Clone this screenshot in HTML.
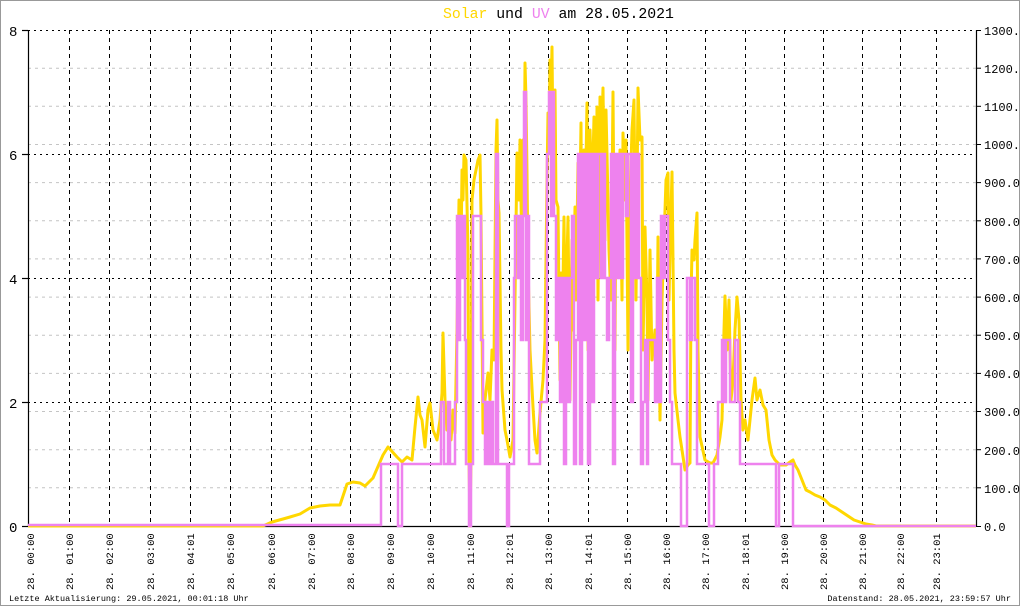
<!DOCTYPE html>
<html><head><meta charset="utf-8"><style>
html,body{margin:0;padding:0;background:#fff}
svg{display:block}
text{font-family:"Liberation Mono",monospace}
</style></head><body>
<svg width="1020" height="606" viewBox="0 0 1020 606" xmlns="http://www.w3.org/2000/svg">
<rect x="0.5" y="0.5" width="1019" height="605" fill="#fff" stroke="#999"/>
<text x="443" y="18" font-size="14.8" fill="#000"><tspan fill="#ffd700">Solar</tspan> und <tspan fill="#ee82ee">UV</tspan> am 28.05.2021</text>
<g stroke="#c4c4c4" stroke-width="1" stroke-dasharray="3,4">
<line x1="28" x2="976" y1="487.8" y2="487.8"/><line x1="28" x2="976" y1="449.7" y2="449.7"/><line x1="28" x2="976" y1="411.5" y2="411.5"/><line x1="28" x2="976" y1="373.4" y2="373.4"/><line x1="28" x2="976" y1="335.2" y2="335.2"/><line x1="28" x2="976" y1="297.1" y2="297.1"/><line x1="28" x2="976" y1="258.9" y2="258.9"/><line x1="28" x2="976" y1="220.8" y2="220.8"/><line x1="28" x2="976" y1="182.6" y2="182.6"/><line x1="28" x2="976" y1="144.5" y2="144.5"/><line x1="28" x2="976" y1="106.3" y2="106.3"/><line x1="28" x2="976" y1="68.2" y2="68.2"/>
</g>
<g stroke="#000" stroke-width="1" stroke-dasharray="2,4">
<line x1="28" x2="976" y1="402.5" y2="402.5"/><line x1="28" x2="976" y1="278.5" y2="278.5"/><line x1="28" x2="976" y1="154.5" y2="154.5"/><line x1="28" x2="976" y1="30.5" y2="30.5"/>
</g>
<g stroke="#000" stroke-width="1" stroke-dasharray="4,4">
<line x1="69.5" x2="69.5" y1="30" y2="526"/><line x1="109.5" x2="109.5" y1="30" y2="526"/><line x1="150.5" x2="150.5" y1="30" y2="526"/><line x1="190.5" x2="190.5" y1="30" y2="526"/><line x1="230.5" x2="230.5" y1="30" y2="526"/><line x1="271.5" x2="271.5" y1="30" y2="526"/><line x1="311.5" x2="311.5" y1="30" y2="526"/><line x1="350.5" x2="350.5" y1="30" y2="526"/><line x1="390.5" x2="390.5" y1="30" y2="526"/><line x1="430.5" x2="430.5" y1="30" y2="526"/><line x1="470.5" x2="470.5" y1="30" y2="526"/><line x1="509.5" x2="509.5" y1="30" y2="526"/><line x1="548.5" x2="548.5" y1="30" y2="526"/><line x1="588.5" x2="588.5" y1="30" y2="526"/><line x1="627.5" x2="627.5" y1="30" y2="526"/><line x1="666.5" x2="666.5" y1="30" y2="526"/><line x1="705.5" x2="705.5" y1="30" y2="526"/><line x1="745.5" x2="745.5" y1="30" y2="526"/><line x1="784.5" x2="784.5" y1="30" y2="526"/><line x1="823.5" x2="823.5" y1="30" y2="526"/><line x1="862.5" x2="862.5" y1="30" y2="526"/><line x1="900.5" x2="900.5" y1="30" y2="526"/><line x1="936.5" x2="936.5" y1="30" y2="526"/>
</g>
<g stroke="#000" stroke-width="1.2">
<line x1="28.5" x2="28.5" y1="30" y2="527"/><line x1="976.5" x2="976.5" y1="30" y2="527"/><line x1="28" x2="976" y1="526.5" y2="526.5"/>
<line x1="22" x2="28" y1="30.5" y2="30.5"/><line x1="22" x2="28" y1="154.5" y2="154.5"/><line x1="22" x2="28" y1="278.5" y2="278.5"/><line x1="22" x2="28" y1="402.5" y2="402.5"/><line x1="22" x2="28" y1="526.5" y2="526.5"/>
</g>
<g stroke="#000" stroke-width="1">
<line x1="976" x2="981" y1="30.5" y2="30.5"/><line x1="976" x2="981" y1="68.2" y2="68.2"/><line x1="976" x2="981" y1="106.3" y2="106.3"/><line x1="976" x2="981" y1="144.5" y2="144.5"/><line x1="976" x2="981" y1="182.6" y2="182.6"/><line x1="976" x2="981" y1="220.8" y2="220.8"/><line x1="976" x2="981" y1="258.9" y2="258.9"/><line x1="976" x2="981" y1="297.1" y2="297.1"/><line x1="976" x2="981" y1="335.2" y2="335.2"/><line x1="976" x2="981" y1="373.4" y2="373.4"/><line x1="976" x2="981" y1="411.5" y2="411.5"/><line x1="976" x2="981" y1="449.7" y2="449.7"/><line x1="976" x2="981" y1="487.8" y2="487.8"/><line x1="976" x2="981" y1="526.5" y2="526.5"/>
</g>
<polyline fill="none" stroke="#ffd700" stroke-width="3" stroke-linejoin="round" points="28,526 263,526 272,522 283,519 290,517 300,514 310,508 320,506 330,505 340,505 347,484 353,482 360,483 365,486 373,478 383,455 388,447 397,457 402,462 407,457 412,460 415,427 418,397 420,415 422,420 425,447 428,410 430,403 433,430 437,440 440,420 442,393 443,333 445,400 447,430 449,405 451,440 453,410 455,433 457,330 459,200 461,250 462,170 463,200 464,155 466,160 468,250 469,460 470,526 471,460 472,200 474,180 476,170 478,160 480,155 481,215 483,433 485,400 488,373 490,400 492,350 494,360 496,150 497,120 498,200 499,213 501,350 502,390 505,430 507,440 510,457 513,440 515,300 517,153 519,200 520,140 522,260 523,140 524,200 525,63 526,100 527,173 528,263 530,350 533,407 535,440 537,453 540,413 543,380 545,340 547,180 548,113 549,150 550,60 551,100 552,47 553,150 555,90 556,200 558,207 559,300 560,380 561,273 562,350 564,217 565,300 567,260 568,217 570,400 572,240 573,330 575,207 576,300 578,163 579,260 581,123 582,300 584,150 585,220 587,103 588,350 590,130 592,200 594,117 596,250 597,107 598,300 600,97 601,160 603,88 605,240 606,110 608,200 609,250 611,300 613,92 615,350 616,180 618,250 620,150 622,300 623,133 625,200 626,140 628,350 630,200 632,130 634,100 636,300 638,88 640,140 642,137 643,350 645,227 647,300 648,400 650,250 652,360 655,330 657,350 658,237 660,420 662,300 664,240 666,180 668,173 669,300 670,250 672,172 674,350 675,393 678,420 680,437 682,450 685,470 688,465 690,463 691,300 692,250 694,260 695,240 697,213 698,350 700,437 705,460 710,463 713,463 717,455 720,437 722,420 724,330 725,296 727,350 729,300 731,400 733,380 735,330 737,297 739,320 741,400 743,430 745,420 748,440 752,400 755,378 757,400 760,390 763,405 766,410 769,440 772,455 775,460 780,465 786,465 790,462 793,460 795,465 798,470 802,480 806,490 810,492 815,495 820,497 825,500 830,505 836,508 842,512 848,516 854,520 860,522 866,524 872,525 876,526 976,526"/>
<path fill="none" stroke="#ee82ee" stroke-width="2.5" d="M28 525 H381 V464 H398 V526 H402 V464 H441 V402 H444 V464 H448 V402 H450 V464 H455 V402 H457 V216 H459 V340 H460 V216 H462 V278 H463 V216 H465 V340 H466 V464 H469 V526 H471 V464 H473 V216 H481 V340 H483 V402 H485 V464 H487 V402 H489 V464 H491 V402 H493 V464 H496 V154 H498 V464 H507 V526 H509 V464 H514 V278 H515 V216 H518 V278 H519 V216 H521 V340 H523 V216 H524 V92 H526 V340 H527 V216 H529 V464 H540 V402 H547 V154 H549 V92 H551 V216 H552 V92 H554 V216 H556 V340 H558 V278 H560 V402 H562 V278 H564 V464 H566 V278 H568 V402 H570 V278 H572 V216 H574 V464 H576 V340 H578 V154 H580 V464 H582 V154 H584 V340 H586 V154 H588 V464 H590 V154 H592 V402 H594 V154 H596 V278 H598 V154 H601 V278 H603 V154 H605 V278 H607 V340 H609 V278 H611 V154 H613 V464 H615 V154 H617 V278 H619 V154 H621 V278 H623 V154 H626 V216 H628 V154 H631 V402 H633 V154 H635 V278 H637 V154 H639 V278 H641 V464 H643 V402 H645 V340 H647 V464 H648 V340 H655 V402 H657 V278 H659 V402 H661 V216 H663 V278 H665 V216 H668 V340 H670 V402 H672 V464 H681 V526 H687 V278 H690 V340 H692 V278 H695 V340 H697 V464 H709 V526 H714 V464 H718 V402 H722 V340 H724 V402 H726 V340 H730 V402 H735 V340 H738 V402 H740 V464 H776 V526 H779 V464 H793 V526 H976"/>
<g font-size="14" fill="#000">
<text x="9" y="36">8</text><text x="9" y="160">6</text><text x="9" y="284">4</text><text x="9" y="408">2</text><text x="9" y="532">0</text>
</g>
<g font-size="12" fill="#000">
<text x="984" y="35">1300.0</text><text x="984" y="73">1200.0</text><text x="984" y="111">1100.0</text><text x="984" y="149">1000.0</text><text x="984" y="187">900.0</text><text x="984" y="226">800.0</text><text x="984" y="264">700.0</text><text x="984" y="302">600.0</text><text x="984" y="340">500.0</text><text x="984" y="378">400.0</text><text x="984" y="416">300.0</text><text x="984" y="455">200.0</text><text x="984" y="493">100.0</text><text x="984" y="531">0.0</text>
</g>
<g font-size="10.5" fill="#000">
<text transform="translate(34,590) rotate(-90)">28. 00:00</text>
<text transform="translate(73,590) rotate(-90)">28. 01:00</text>
<text transform="translate(113,590) rotate(-90)">28. 02:00</text>
<text transform="translate(154,590) rotate(-90)">28. 03:00</text>
<text transform="translate(194,590) rotate(-90)">28. 04:01</text>
<text transform="translate(234,590) rotate(-90)">28. 05:00</text>
<text transform="translate(275,590) rotate(-90)">28. 06:00</text>
<text transform="translate(315,590) rotate(-90)">28. 07:00</text>
<text transform="translate(354,590) rotate(-90)">28. 08:00</text>
<text transform="translate(394,590) rotate(-90)">28. 09:00</text>
<text transform="translate(434,590) rotate(-90)">28. 10:00</text>
<text transform="translate(474,590) rotate(-90)">28. 11:00</text>
<text transform="translate(513,590) rotate(-90)">28. 12:01</text>
<text transform="translate(552,590) rotate(-90)">28. 13:00</text>
<text transform="translate(592,590) rotate(-90)">28. 14:01</text>
<text transform="translate(631,590) rotate(-90)">28. 15:00</text>
<text transform="translate(670,590) rotate(-90)">28. 16:00</text>
<text transform="translate(709,590) rotate(-90)">28. 17:00</text>
<text transform="translate(749,590) rotate(-90)">28. 18:01</text>
<text transform="translate(788,590) rotate(-90)">28. 19:00</text>
<text transform="translate(827,590) rotate(-90)">28. 20:00</text>
<text transform="translate(866,590) rotate(-90)">28. 21:00</text>
<text transform="translate(904,590) rotate(-90)">28. 22:00</text>
<text transform="translate(940,590) rotate(-90)">28. 23:01</text>
</g>
<text x="9" y="601" font-size="8.5" fill="#000">Letzte Aktualisierung: 29.05.2021, 00:01:18 Uhr</text>
<text x="1011" y="601" font-size="8.5" fill="#000" text-anchor="end">Datenstand: 28.05.2021, 23:59:57 Uhr</text>
</svg>
</body></html>
